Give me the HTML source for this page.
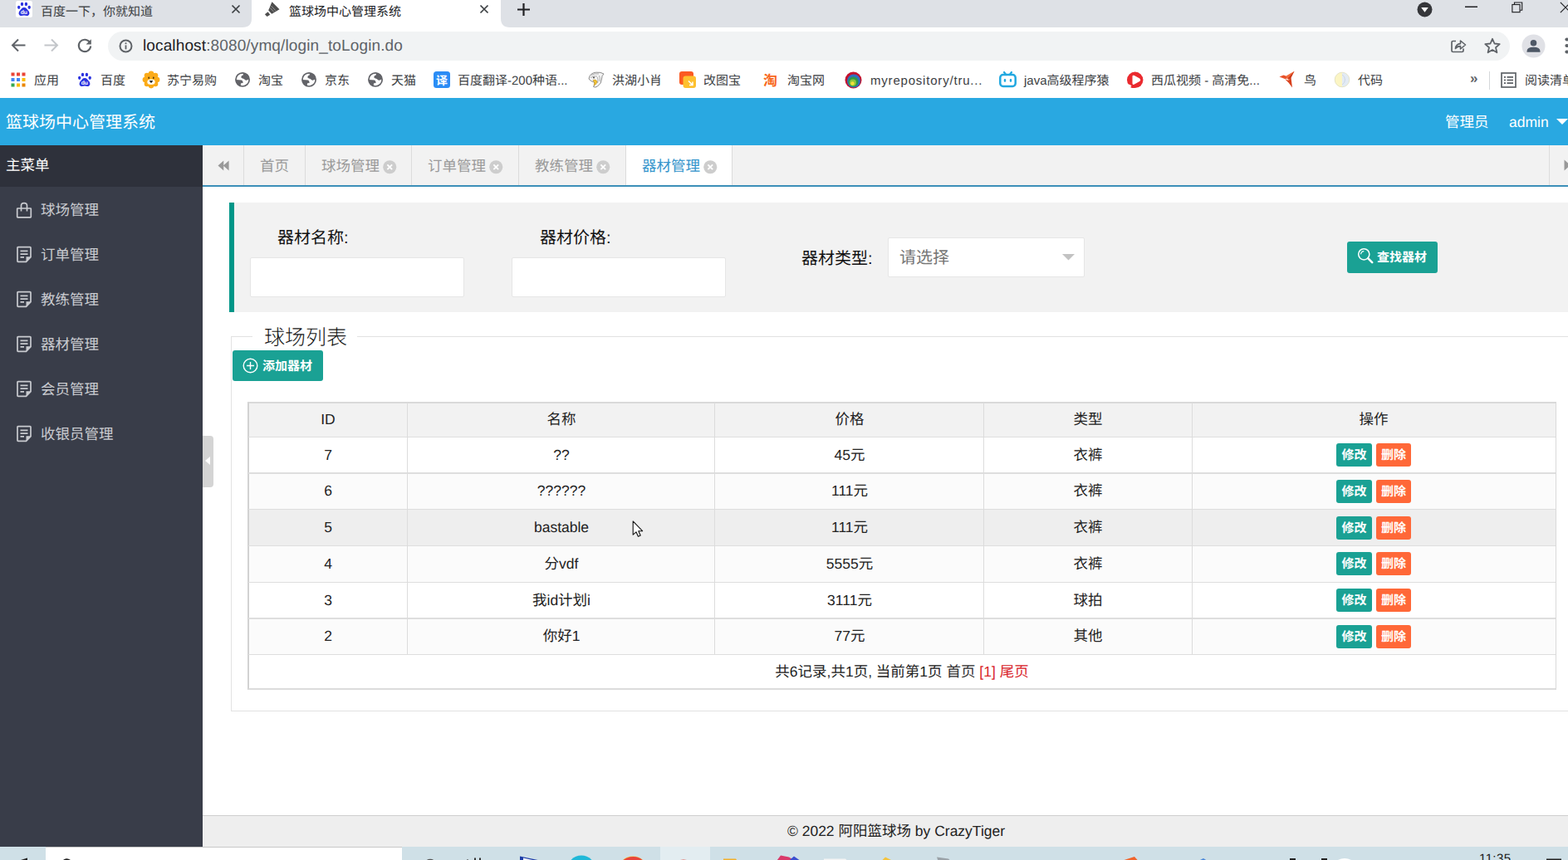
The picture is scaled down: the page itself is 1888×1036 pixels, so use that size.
<!DOCTYPE html>
<html lang="zh-CN">
<head>
<meta charset="utf-8">
<title>篮球场中心管理系统</title>
<style>
*{box-sizing:border-box;margin:0;padding:0}
html,body{width:1888px;height:1036px;overflow:hidden;background:#fff}
body{font-family:"Liberation Sans","Noto Sans CJK SC",sans-serif;color:#222;position:relative;-webkit-font-smoothing:antialiased;text-rendering:geometricPrecision}
.a{position:absolute;white-space:nowrap}
svg{position:absolute;overflow:visible}
/* ---------- browser chrome ---------- */
#tabstrip{left:0;top:0;width:1888px;height:32.800px;background:#dee1e6}
#toolbar{left:0;top:32.800px;width:1888px;height:43.200px;background:#fff}
#bmbar{left:0;top:76px;width:1888px;height:42px;background:#fff}
.tt{font-size:15px;line-height:20px;color:#3c4043;top:5px}
.bm{font-size:15px;line-height:20px;color:#3c4043;top:88px}
/* ---------- app ---------- */
#hdr{left:0;top:118px;width:1888px;height:57px;background:#29a8e1}
#side{left:0;top:175px;width:244px;height:845px;background:#393d49}
#sidet{left:0;top:175px;width:244px;height:50px;background:#2e313b}
.mi{left:49px;font-size:17.5px;line-height:24px;color:#c9cbd0}
#tabbar{left:244px;top:175px;width:1644px;height:48px;background:#f2f2f2}
#tabline{left:244px;top:222.500px;width:1644px;height:2.500px;background:#3c8fb8}
.sep{top:175px;width:1px;height:48px;background:#dcdcdc}
.tb{top:188px;font-size:17.5px;line-height:24px;color:#9a9a9a}
.tx{top:192px;width:15px;height:15px;border-radius:50%;background:#cfcfcf}
#form{left:276px;top:244px;width:1612px;height:132px;background:#f2f2f2;border-left:6px solid #009688}
.lbl{font-size:20px;line-height:28px;color:#111}
.inp{background:#fff;border:1px solid #e6e6e6;border-radius:2px}
.btn{background:#1aa194;border-radius:3px;color:#fff;font-weight:bold;font-size:15px;text-align:center}
/* table */
.hl{height:1px;background:#dedede;left:299px;width:1574px}
.vl{width:1px;background:#dcdcdc;top:485px;height:303px}
.td{font-size:17.5px;line-height:24px;color:#222;text-align:center;transform:translateX(-50%)}
.be{width:43px;height:28px;border-radius:3px;background:#1aa194;color:#fff;font-weight:bold;font-size:15px;line-height:30px;text-align:center;left:1609px}
.bd{width:42px;height:28px;border-radius:3px;background:#ff6838;color:#fff;font-weight:bold;font-size:15px;line-height:30px;text-align:center;left:1657px}
#foot{left:244px;top:982px;width:1644px;height:38px;background:#eee;border-top:1px solid #cfcfcf}
#task{left:0;top:1020px;width:1888px;height:16px;background:#cfe0e7}
</style>
</head>
<body>
<!-- ================= BROWSER CHROME ================= -->
<div class="a" id="tabstrip"></div>
<div class="a" id="toolbar"></div>
<div class="a" id="bmbar"></div>

<!-- tab strip -->
<svg style="left:0;top:0" width="1888" height="33"><path d="M292,33 Q303,33 303,22 L303,0 L603,0 L603,22 Q603,33 614,33 Z" fill="#fff"/></svg>
<svg id="fav1" style="left:19px;top:1px" width="20" height="20" viewBox="0 0 20 20"><rect x="0" y="0" width="20" height="20" rx="2.500" fill="#fff"/><g fill="#2a32e0"><ellipse cx="3.700" cy="7.800" rx="1.700" ry="2.100"/><ellipse cx="7.500" cy="3.900" rx="1.700" ry="2.200"/><ellipse cx="12.400" cy="3.900" rx="1.700" ry="2.200"/><ellipse cx="16.200" cy="7.800" rx="1.700" ry="2.100"/><path d="M10,7.900c2.500,0,3.500,2.200,5,3.900c1.900,2.100,2.100,5.300-.7,6.100c-1.500,.4-2.700-.3-4.300-.3s-2.800,.7-4.300,.3c-2.800-.8-2.600-4-.7-6.100C6.500,10.100,7.500,7.900,10,7.900z"/></g><text x="9.800" y="16.400" font-size="6.800" font-weight="bold" fill="#fff" text-anchor="middle" font-family="Liberation Sans">du</text></svg>
<div class="a tt" style="left:49px">百度一下，你就知道</div>
<svg style="left:278px;top:5px" width="12" height="12" viewBox="0 0 12 12"><path d="M1.500,1.500L10.500,10.500M10.500,1.500L1.500,10.500" stroke="#3c4043" stroke-width="1.700" fill="none"/></svg>
<svg id="fav2" style="left:318px;top:0px" width="20" height="22" viewBox="318 0 20 22"><path d="M327.500,2.200L336.500,11.300L327.200,16.800L323.200,12.600Z" fill="#4d4d4d"/><path d="M322.600,14.300L325.300,17.800L321.500,19.900L318.900,17.300Z" fill="#4d4d4d"/><path d="M325.200,9.400L329.700,14.200M326.600,7.200L331.800,12.700" stroke="#bdbdbd" stroke-width=".7" fill="none"/></svg>
<div class="a tt" style="left:348px;color:#202124">篮球场中心管理系统</div>
<svg style="left:577px;top:5px" width="12" height="12" viewBox="0 0 12 12"><path d="M1.500,1.500L10.500,10.500M10.500,1.500L1.500,10.500" stroke="#3c4043" stroke-width="1.700" fill="none"/></svg>
<svg style="left:622px;top:3px" width="17" height="17" viewBox="0 0 17 17"><path d="M8.500,1V16M1,8.500H16" stroke="#202124" stroke-width="2.200" fill="none"/></svg>
<svg style="left:1706px;top:2px" width="19" height="19" viewBox="0 0 19 19"><circle cx="9.500" cy="9.500" r="9" fill="#35363a"/><path d="M5.200,7L13.800,7L9.500,12.800Z" fill="#fff"/></svg>
<svg style="left:1764px;top:7px" width="16" height="3"><rect x="0" y="0.500" width="15" height="1.500" fill="#202124"/></svg>
<svg style="left:1820px;top:1.500px" width="14" height="14" viewBox="0 0 16 16"><rect x="1" y="4" width="10.500" height="10.500" fill="none" stroke="#202124" stroke-width="1.300"/><path d="M4,4V1.200H14.500V11.700H11.500" fill="none" stroke="#202124" stroke-width="1.300"/></svg>
<svg style="left:1878px;top:2px" width="14" height="14" viewBox="0 0 16 16"><path d="M1,1L15,15M15,1L1,15" stroke="#202124" stroke-width="1.400" fill="none"/></svg>

<!-- toolbar -->
<svg style="left:13px;top:45.400px" width="19" height="19" viewBox="0 0 19 19"><path d="M17.500,9.500H2.500M9,2.500L2,9.500L9,16.500" stroke="#5f6368" stroke-width="2" fill="none"/></svg>
<svg style="left:52px;top:45.400px" width="19" height="19" viewBox="0 0 19 19"><path d="M1.500,9.500H16.500M10,2.500L17,9.500L10,16.500" stroke="#c3c6ca" stroke-width="2" fill="none"/></svg>
<svg style="left:92px;top:44.500px" width="20" height="20" viewBox="0 0 20 20"><path d="M16.200,6.200A7.200,7.200 0 1 0 17.200,10.500" stroke="#5f6368" stroke-width="2.100" fill="none"/><path d="M17.800,2.200V8.400H11.600Z" fill="#5f6368"/></svg>
<div class="a" style="left:130px;top:38px;width:1688px;height:35px;border-radius:18px;background:#f1f3f4"></div>
<svg style="left:143px;top:47px" width="17" height="17" viewBox="0 0 17 17"><circle cx="8.500" cy="8.500" r="7" fill="none" stroke="#5f6368" stroke-width="2"/><rect x="7.600" y="7.400" width="1.800" height="5" fill="#5f6368"/><rect x="7.600" y="4.300" width="1.800" height="1.800" fill="#5f6368"/></svg>
<div class="a" id="url" style="left:172px;top:44px;font-size:19px;line-height:24px;color:#5f6368;letter-spacing:.13px"><span style="color:#202124">localhost</span>:8080/ymq/login_toLogin.do</div>
<svg style="left:1745px;top:44px" width="22" height="22" viewBox="0 0 22 22"><path d="M8,5.500H4.500Q3,5.500 3,7V17Q3,18.500 4.500,18.500H15.500Q17,18.500 17,17V14.500" fill="none" stroke="#5f6368" stroke-width="1.700"/><path d="M7.500,14.500Q8,9 13.500,8.600V5L19.500,10L13.500,15V11.600Q9.500,11.600 7.500,14.500Z" fill="none" stroke="#5f6368" stroke-width="1.600" stroke-linejoin="round"/></svg>
<svg style="left:1786px;top:44px" width="22" height="22" viewBox="0 0 22 22"><path d="M11,2.800L13.500,8.500L19.700,9.100L15,13.200L16.400,19.300L11,16.100L5.600,19.300L7,13.200L2.300,9.100L8.500,8.500Z" fill="none" stroke="#5f6368" stroke-width="1.800" stroke-linejoin="round"/></svg>
<svg style="left:1832px;top:41px" width="29" height="29" viewBox="0 0 29 29"><circle cx="14.500" cy="14.500" r="14" fill="#e0e1e6"/><circle cx="14.500" cy="10.800" r="3.800" fill="#4e5866"/><path d="M6.500,20.800Q6.500,15.800 14.500,15.800Q22.500,15.800 22.500,20.800V21.800H6.500Z" fill="#4e5866"/></svg>
<svg style="left:1884px;top:44px" width="5" height="22" viewBox="0 0 5 22"><circle cx="2.500" cy="3.500" r="2.100" fill="#5f6368"/><circle cx="2.500" cy="11" r="2.100" fill="#5f6368"/><circle cx="2.500" cy="18.500" r="2.100" fill="#5f6368"/></svg>

<!-- bookmarks -->
<svg style="left:13px;top:87px" width="18" height="18" viewBox="0 0 18 18"><g><rect x="0.500" y="0.500" width="4" height="4" fill="#ea4335"/><rect x="7" y="0.500" width="4" height="4" fill="#ea4335"/><rect x="13.500" y="0.500" width="4" height="4" fill="#ea4335"/><rect x="0.500" y="7" width="4" height="4" fill="#4285f4"/><rect x="7" y="7" width="4" height="4" fill="#4285f4"/><rect x="13.500" y="7" width="4" height="4" fill="#fbbc05"/><rect x="0.500" y="13.500" width="4" height="4" fill="#34a853"/><rect x="7" y="13.500" width="4" height="4" fill="#fbbc05"/><rect x="13.500" y="13.500" width="4" height="4" fill="#ea8600"/></g></svg>
<div class="a bm" style="left:41px">应用</div>
<svg style="left:92px;top:86px" width="20" height="20" viewBox="0 0 20 20"><g fill="#2a32e0"><ellipse cx="3.700" cy="7.800" rx="1.700" ry="2.100"/><ellipse cx="7.500" cy="3.900" rx="1.700" ry="2.200"/><ellipse cx="12.400" cy="3.900" rx="1.700" ry="2.200"/><ellipse cx="16.200" cy="7.800" rx="1.700" ry="2.100"/><path d="M10,7.900c2.500,0,3.500,2.200,5,3.900c1.900,2.100,2.100,5.300-.7,6.100c-1.500,.4-2.700-.3-4.300-.3s-2.800,.7-4.300,.3c-2.800-.8-2.600-4-.7-6.100C6.500,10.100,7.500,7.900,10,7.900z"/></g><text x="9.800" y="16.400" font-size="6.800" font-weight="bold" fill="#fff" text-anchor="middle" font-family="Liberation Sans">du</text></svg>
<div class="a bm" style="left:121px">百度</div>
<svg style="left:171px;top:85px" width="22" height="22" viewBox="0 0 22 22"><g fill="#fbab18"><circle cx="11" cy="11" r="8.300"/><circle cx="11.00" cy="3.90" r="3.300"/><circle cx="16.02" cy="5.98" r="3.300"/><circle cx="18.10" cy="11.00" r="3.300"/><circle cx="16.02" cy="16.02" r="3.300"/><circle cx="11.00" cy="18.10" r="3.300"/><circle cx="5.98" cy="16.02" r="3.300"/><circle cx="3.90" cy="11.00" r="3.300"/><circle cx="5.98" cy="5.98" r="3.300"/></g><ellipse cx="11" cy="13.800" rx="4.700" ry="3.300" fill="#fffaf0"/><ellipse cx="8.200" cy="8.700" rx=".75" ry="1.200" fill="#3a2a14"/><ellipse cx="13.800" cy="8.700" rx=".75" ry="1.200" fill="#3a2a14"/><path d="M9.200,12.500H12.800L11,14.700Z" fill="#111" stroke="#111" stroke-width=".6" stroke-linejoin="round"/></svg>
<div class="a bm" style="left:201px">苏宁易购</div>
<div class="a bm" style="left:311px">淘宝</div>
<div class="a bm" style="left:391px">京东</div>
<div class="a bm" style="left:471px">天猫</div>
<svg style="left:522px;top:86px" width="20" height="20" viewBox="0 0 20 20"><rect x="0" y="0" width="20" height="20" rx="3.500" fill="#2b8cf5"/><text x="3" y="15.600" font-size="14" font-weight="bold" fill="#fff" font-family="'Liberation Sans','Noto Sans CJK SC',sans-serif">译</text></svg>
<div class="a bm" style="left:551px">百度翻译-200种语...</div>
<svg style="left:707px;top:85px" width="22" height="22" viewBox="0 0 22 22"><path d="M2,10Q3,3 10.500,2.200Q16.500,1.600 20,4Q17.500,6 17.500,10Q17.500,15.500 12.500,19Q9.500,21 7.500,19.500Q10,16.500 8.500,14Q4.500,13.500 2,10Z" fill="#f4f4f4" stroke="#8c8c8c" stroke-width="1"/><path d="M5,5.500Q9,3 14,4M4,8.500Q8,6 12,7M14.500,6Q16,9 15,13M12.500,8Q13.500,11 12.500,15" stroke="#9a9a9a" stroke-width=".8" fill="none"/><path d="M7,11.500Q10.500,10 12,13Q11.500,17 8,18Q10,15 7,11.500Z" fill="#f2c230" stroke="#b88a18" stroke-width=".5"/><circle cx="8" cy="8.500" r="1" fill="#444"/></svg>
<div class="a bm" style="left:737px">洪湖小肖</div>
<svg style="left:818px;top:86px" width="20" height="20" viewBox="0 0 20 20"><rect x="0" y="0" width="17" height="16" rx="3" fill="#fb5a22"/><rect x="4.500" y="5.500" width="15.500" height="14.500" rx="3" fill="#fdc02f"/><path d="M11,11.500L16,16.500M16,12.500V16.500H12" stroke="#fff" stroke-width="1.500" fill="none"/></svg>
<div class="a bm" style="left:847px">改图宝</div>
<div class="a" style="left:919px;top:87px;font-size:17px;line-height:22px;font-weight:bold;color:#f8681c">淘</div>
<div class="a bm" style="left:948px">淘宝网</div>
<svg style="left:1017px;top:86px" width="21" height="21" viewBox="0 0 21 21"><circle cx="10.500" cy="10.500" r="10" fill="#c4122d"/><circle cx="11" cy="11.500" r="8" fill="#2f6fc1"/><circle cx="10.500" cy="12.500" r="6" fill="#2f9a46"/><circle cx="10" cy="13.500" r="4" fill="#8cc63f"/><circle cx="9.500" cy="14.500" r="2.200" fill="#f5e03a"/></svg>
<div class="a bm" style="left:1048px;letter-spacing:.8px">myrepository/tru...</div>
<svg style="left:1203px;top:85px" width="21" height="21" viewBox="0 0 21 21"><path d="M6,2L8.300,5M15,2L12.700,5" stroke="#22a8e0" stroke-width="2.200" fill="none" stroke-linecap="round"/><rect x="1.300" y="5" width="18.400" height="14" rx="3.500" fill="none" stroke="#22a8e0" stroke-width="2.500"/><rect x="5.800" y="10" width="2.400" height="3.800" rx="1.100" fill="#22a8e0"/><rect x="12.800" y="10" width="2.400" height="3.800" rx="1.100" fill="#22a8e0"/></svg>
<div class="a bm" style="left:1233px">java高级程序猿</div>
<svg style="left:1356px;top:86px" width="21" height="21" viewBox="0 0 21 21"><circle cx="10.700" cy="10.300" r="9.700" fill="#ea2a2f"/><path d="M3.500,14.500Q3,18.500 6.500,19.800Q9,20.500 10.500,19.500Z" fill="#ea2a2f"/><path d="M8.300,6.300Q8.300,5 9.500,5.700L15.800,9.300Q17,10.300 15.800,11.300L9.500,14.900Q8.300,15.600 8.300,14.300Z" fill="#fff" stroke="#fff" stroke-width="1.600" stroke-linejoin="round"/><path d="M1.500,15.500Q4.500,15 6.500,17.500L4.200,20Z" fill="#fff"/></svg>
<div class="a bm" style="left:1386px">西瓜视频 - 高清免...</div>
<svg style="left:1540px;top:85px" width="22" height="22" viewBox="0 0 22 22"><path d="M0.500,7.500L5.500,5.500L8.500,6.500L10.500,9.500L7,10Z" fill="#e8522a"/><path d="M8.500,6.500L18.500,0.800L14.500,8.500L11.500,12Z" fill="#f26a3a"/><path d="M7,10L11.500,12L14.500,8.500L16,20.500L11.500,14.500Z" fill="#d8401c"/><path d="M10.500,9.500L18.500,0.800L13.500,10.500Z" fill="#c9381a"/></svg>
<div class="a bm" style="left:1570px">鸟</div>
<svg style="left:1606px;top:86px" width="20" height="20" viewBox="0 0 20 20"><circle cx="10" cy="10" r="8.800" fill="#e3ebf4"/><path d="M10,1.200A8.800,8.800 0 0 0 10,18.800Z" fill="#fbf5c4"/><circle cx="10" cy="10" r="8.800" fill="none" stroke="#e4e2c2" stroke-width=".9"/><path d="M10,4Q13.500,6 13.500,10Q13.500,14 10,16" fill="none" stroke="#c9d4e2" stroke-width=".9"/></svg>
<div class="a bm" style="left:1635px">代码</div>
<div class="a" style="left:1770px;top:84px;font-size:17px;line-height:22px;color:#5f6368;font-weight:bold">»</div>
<div class="a" style="left:1793px;top:86px;width:1px;height:22px;background:#d5d7da"></div>
<svg style="left:1807px;top:87px" width="19" height="19" viewBox="0 0 19 19"><rect x="1" y="1" width="17" height="17" fill="none" stroke="#5f6368" stroke-width="1.700"/><g fill="#5f6368"><rect x="4" y="5" width="2" height="1.800"/><rect x="7.500" y="5" width="7.500" height="1.800"/><rect x="4" y="8.600" width="2" height="1.800"/><rect x="7.500" y="8.600" width="7.500" height="1.800"/><rect x="4" y="12.200" width="2" height="1.800"/><rect x="7.500" y="12.200" width="7.500" height="1.800"/></g></svg>
<div class="a bm" style="left:1836px">阅读清单</div>
<svg style="left:280px;top:84px" width="24" height="24" viewBox="0 0 24 24"><circle cx="12.050" cy="11.900" r="8.100" fill="none" stroke="#626368" stroke-width="1.700"/><path d="M12.900,3.500L12.700,6.600Q10.500,7.200 10.300,8.800Q10.100,10.200 12,10.400Q13.900,10.600 14.800,12Q15.800,13.100 17.200,12.500L19.900,11.600A8.400,8.400 0 0 0 12.900,3.500Z" fill="#626368"/><path d="M3.700,12L10.800,12.400Q12.200,12.800 12.400,14.400Q13.100,15.800 12.200,16L10.200,16.200Q9.600,17.400 9.900,20.200A8.400,8.400 0 0 1 3.700,12Z" fill="#626368"/></svg>
<svg style="left:360px;top:84px" width="24" height="24" viewBox="0 0 24 24"><circle cx="12.050" cy="11.900" r="8.100" fill="none" stroke="#626368" stroke-width="1.700"/><path d="M12.900,3.500L12.700,6.600Q10.500,7.200 10.300,8.800Q10.100,10.200 12,10.400Q13.900,10.600 14.800,12Q15.800,13.100 17.200,12.500L19.900,11.600A8.400,8.400 0 0 0 12.900,3.500Z" fill="#626368"/><path d="M3.700,12L10.800,12.400Q12.200,12.800 12.400,14.400Q13.100,15.800 12.200,16L10.200,16.200Q9.600,17.400 9.900,20.200A8.400,8.400 0 0 1 3.700,12Z" fill="#626368"/></svg>
<svg style="left:440px;top:84px" width="24" height="24" viewBox="0 0 24 24"><circle cx="12.050" cy="11.900" r="8.100" fill="none" stroke="#626368" stroke-width="1.700"/><path d="M12.900,3.500L12.700,6.600Q10.500,7.200 10.300,8.800Q10.100,10.200 12,10.400Q13.900,10.600 14.800,12Q15.800,13.100 17.200,12.500L19.900,11.600A8.400,8.400 0 0 0 12.900,3.500Z" fill="#626368"/><path d="M3.700,12L10.800,12.400Q12.200,12.800 12.400,14.400Q13.100,15.800 12.200,16L10.200,16.200Q9.600,17.400 9.900,20.200A8.400,8.400 0 0 1 3.700,12Z" fill="#626368"/></svg>
<!--CHROME-->

<!-- ================= APP ================= -->
<div class="a" id="hdr"></div>
<div class="a" id="side"></div>
<div class="a" id="sidet"></div>
<div class="a" id="tabbar"></div>
<div class="a" id="tabline"></div>
<div class="a" id="foot"></div>
<div class="a" id="task"></div>

<!-- header -->
<div class="a" style="left:7px;top:134px;font-size:20px;line-height:28px;color:#fff">篮球场中心管理系统</div>
<div class="a" style="left:1740px;top:135px;font-size:17.500px;line-height:24px;color:#fff">管理员</div>
<div class="a" style="left:1817px;top:135px;font-size:17.500px;line-height:24px;color:#fff">admin</div>
<svg style="left:1874px;top:143px" width="14" height="8"><path d="M0,0H14L7,7Z" fill="#fff"/></svg>
<!-- sidebar -->
<div class="a" style="left:7px;top:187px;font-size:17.500px;line-height:24px;color:#fff">主菜单</div>
<svg style="left:19px;top:243px" width="20" height="20" viewBox="0 0 20 20"><rect x="1.700" y="8" width="16.600" height="10.800" rx=".6" fill="none" stroke="#c9cbd0" stroke-width="1.700"/><path d="M6.500,11.500V4.800Q6.500,1.600 10,1.600Q13.500,1.600 13.500,4.800V11.500" fill="none" stroke="#c9cbd0" stroke-width="1.700"/></svg>
<div class="a mi" style="top:241px">球场管理</div>
<div class="a mi" style="top:295px">订单管理</div>
<div class="a mi" style="top:349px">教练管理</div>
<div class="a mi" style="top:403px">器材管理</div>
<div class="a mi" style="top:457px">会员管理</div>
<div class="a mi" style="top:511px">收银员管理</div>
<div class="a" style="left:244px;top:525px;width:13px;height:62px;background:#d4d4d4;border-radius:0 4px 4px 0"></div>
<svg style="left:247px;top:550px" width="6" height="10"><path d="M6,0V10L0,5Z" fill="#fff"/></svg>
<!-- tab bar -->
<svg style="left:261.500px;top:192.500px" width="14.500" height="13" viewBox="0 0 16 14" preserveAspectRatio="none"><path d="M8,0.500V13.500L0.500,7ZM15,0.500V13.500L7.500,7Z" fill="#999"/></svg>
<div class="a sep" style="left:293px"></div>
<div class="a tb" style="left:313px">首页</div>
<div class="a sep" style="left:367px"></div>
<div class="a tb" style="left:387px">球场管理</div>
<div class="a sep" style="left:495px"></div>
<div class="a tb" style="left:515px">订单管理</div>
<div class="a sep" style="left:624px"></div>
<div class="a tb" style="left:644px">教练管理</div>
<div class="a sep" style="left:753px"></div>
<div class="a" style="left:754px;top:175px;width:127px;height:48px;background:#fff"></div>
<div class="a tb" style="left:773px;color:#3595cc">器材管理</div>
<div class="a sep" style="left:881px"></div>
<div class="a sep" style="left:1865px"></div>
<svg style="left:1883px;top:192px" width="6" height="14"><path d="M0.500,0.500V13.500L8,7Z" fill="#999"/></svg>
<!-- form -->
<div class="a" id="form"></div>
<div class="a lbl" style="left:334px;top:273px">器材名称:</div>
<div class="a inp" style="left:301px;top:310px;width:258px;height:48px"></div>
<div class="a lbl" style="left:650px;top:273px">器材价格:</div>
<div class="a inp" style="left:616px;top:310px;width:258px;height:48px"></div>
<div class="a lbl" style="left:965px;top:298px">器材类型:</div>
<div class="a inp" style="left:1069px;top:286px;width:237px;height:48px"></div>
<div class="a" style="left:1083px;top:297px;font-size:20px;line-height:28px;color:#757575">请选择</div>
<svg style="left:1279px;top:306px" width="15" height="8"><path d="M0,0H15L7.500,7.500Z" fill="#c2c2c2"/></svg>
<div class="a btn" style="left:1622px;top:291px;width:109px;height:38px"></div>
<svg style="left:1634px;top:298px" width="20" height="20" viewBox="0 0 20 20"><circle cx="8.300" cy="8.300" r="6.600" fill="none" stroke="#fff" stroke-width="1.500"/><path d="M4.600,8.300A3.700,3.700 0 0 1 8.300,4.600" fill="none" stroke="#fff" stroke-width="1.200"/><path d="M13.200,13.200L18.200,18.200" stroke="#fff" stroke-width="2.600" stroke-linecap="round"/></svg>
<div class="a" style="left:1658px;top:301px;font-size:15px;line-height:20px;color:#fff;font-weight:bold">查找器材</div>
<!-- fieldset -->
<div class="a" style="left:278px;top:405px;width:1620px;height:452px;border:1px solid #e2e2e2"></div>
<div class="a" style="left:304px;top:388px;width:126px;height:34px;background:#fff"></div>
<div class="a" style="left:318px;top:390px;font-size:25px;line-height:34px;color:#1a1a1a;font-weight:300">球场列表</div>
<div class="a btn" style="left:280px;top:422px;width:109px;height:37px"></div>
<svg style="left:292px;top:431px" width="19" height="19" viewBox="0 0 19 19"><circle cx="9.500" cy="9.500" r="8.300" fill="none" stroke="#fff" stroke-width="1.400"/><path d="M9.500,5V14M5,9.500H14" stroke="#fff" stroke-width="1.400"/></svg>
<div class="a" style="left:316px;top:432px;font-size:15px;line-height:20px;color:#fff;font-weight:bold">添加器材</div>
<!-- table -->
<div class="a" style="left:298px;top:484px;width:1576px;height:347px;border:1px solid #d9d9d9;border-left:2px solid #d2d2d2;border-top:2px solid #d9d9d9;border-bottom:2px solid #dcdcdc;background:#fff"></div>
<div class="a" style="left:300px;top:486px;width:1573px;height:40px;background:#f2f2f2"></div>
<div class="a" style="left:300px;top:571px;width:1573px;height:42px;background:#fbfbfb"></div>
<div class="a" style="left:300px;top:614px;width:1573px;height:43px;background:#eeeeee"></div>
<div class="a" style="left:300px;top:658px;width:1573px;height:43px;background:#fbfbfb"></div>
<div class="a" style="left:300px;top:746px;width:1573px;height:42px;background:#fbfbfb"></div>
<div class="a hl" style="top:526px;height:1px"></div>
<div class="a hl" style="top:569px;height:2px"></div>
<div class="a hl" style="top:613px;height:1px"></div>
<div class="a hl" style="top:657px;height:1px"></div>
<div class="a hl" style="top:701px;height:1px"></div>
<div class="a hl" style="top:744px;height:2px"></div>
<div class="a hl" style="top:788px;height:1px"></div>
<div class="a vl" style="left:490px"></div>
<div class="a vl" style="left:860px"></div>
<div class="a vl" style="left:1184px"></div>
<div class="a vl" style="left:1435px"></div>
<div class="a td" style="left:395px;top:493px">ID</div>
<div class="a td" style="left:676px;top:493px">名称</div>
<div class="a td" style="left:1023px;top:493px">价格</div>
<div class="a td" style="left:1310px;top:493px">类型</div>
<div class="a td" style="left:1654px;top:493px">操作</div>
<div class="a td" style="left:395px;top:536px">7</div>
<div class="a td" style="left:676px;top:536px">??</div>
<div class="a td" style="left:1023px;top:536px">45元</div>
<div class="a td" style="left:1310px;top:536px">衣裤</div>
<div class="a be" style="top:534px">修改</div><div class="a bd" style="top:534px">删除</div>
<div class="a td" style="left:395px;top:579px">6</div>
<div class="a td" style="left:676px;top:579px">??????</div>
<div class="a td" style="left:1023px;top:579px">111元</div>
<div class="a td" style="left:1310px;top:579px">衣裤</div>
<div class="a be" style="top:577.75px">修改</div><div class="a bd" style="top:577.75px">删除</div>
<div class="a td" style="left:395px;top:623px">5</div>
<div class="a td" style="left:676px;top:623px">bastable</div>
<div class="a td" style="left:1023px;top:623px">111元</div>
<div class="a td" style="left:1310px;top:623px">衣裤</div>
<div class="a be" style="top:621.5px">修改</div><div class="a bd" style="top:621.5px">删除</div>
<div class="a td" style="left:395px;top:667px">4</div>
<div class="a td" style="left:676px;top:667px">分vdf</div>
<div class="a td" style="left:1023px;top:667px">5555元</div>
<div class="a td" style="left:1310px;top:667px">衣裤</div>
<div class="a be" style="top:665.25px">修改</div><div class="a bd" style="top:665.25px">删除</div>
<div class="a td" style="left:395px;top:711px">3</div>
<div class="a td" style="left:676px;top:711px">我id计划i</div>
<div class="a td" style="left:1023px;top:711px">3111元</div>
<div class="a td" style="left:1310px;top:711px">球拍</div>
<div class="a be" style="top:709px">修改</div><div class="a bd" style="top:709px">删除</div>
<div class="a td" style="left:395px;top:754px">2</div>
<div class="a td" style="left:676px;top:754px">你好1</div>
<div class="a td" style="left:1023px;top:754px">77元</div>
<div class="a td" style="left:1310px;top:754px">其他</div>
<div class="a be" style="top:752.75px">修改</div><div class="a bd" style="top:752.75px">删除</div>
<div class="a td" style="left:1086px;top:797px">共6记录,共1页, 当前第1页 <span style="color:#333">首页</span> <span style="color:#d9262c">[1] 尾页</span></div>
<svg style="left:19px;top:296px" width="20" height="21" viewBox="0 0 20 20" preserveAspectRatio="none"><path d="M2,2.400Q2,1.600 2.800,1.600H17.200Q18,1.600 18,2.400V13L12.500,18.400H2.800Q2,18.400 2,17.600Z" fill="none" stroke="#c9cbd0" stroke-width="1.700"/><path d="M18,12.500H12.500V18.400Z" fill="#c9cbd0"/><path d="M5.500,6H14.500M5.500,9.600H14.500M5.500,13.200H10" stroke="#c9cbd0" stroke-width="1.700"/></svg>
<svg style="left:19px;top:350px" width="20" height="21" viewBox="0 0 20 20" preserveAspectRatio="none"><path d="M2,2.400Q2,1.600 2.800,1.600H17.200Q18,1.600 18,2.400V13L12.500,18.400H2.800Q2,18.400 2,17.600Z" fill="none" stroke="#c9cbd0" stroke-width="1.700"/><path d="M18,12.500H12.500V18.400Z" fill="#c9cbd0"/><path d="M5.500,6H14.500M5.500,9.600H14.500M5.500,13.200H10" stroke="#c9cbd0" stroke-width="1.700"/></svg>
<svg style="left:19px;top:404px" width="20" height="21" viewBox="0 0 20 20" preserveAspectRatio="none"><path d="M2,2.400Q2,1.600 2.800,1.600H17.200Q18,1.600 18,2.400V13L12.500,18.400H2.800Q2,18.400 2,17.600Z" fill="none" stroke="#c9cbd0" stroke-width="1.700"/><path d="M18,12.500H12.500V18.400Z" fill="#c9cbd0"/><path d="M5.500,6H14.500M5.500,9.600H14.500M5.500,13.200H10" stroke="#c9cbd0" stroke-width="1.700"/></svg>
<svg style="left:19px;top:458px" width="20" height="21" viewBox="0 0 20 20" preserveAspectRatio="none"><path d="M2,2.400Q2,1.600 2.800,1.600H17.200Q18,1.600 18,2.400V13L12.500,18.400H2.800Q2,18.400 2,17.600Z" fill="none" stroke="#c9cbd0" stroke-width="1.700"/><path d="M18,12.500H12.500V18.400Z" fill="#c9cbd0"/><path d="M5.500,6H14.500M5.500,9.600H14.500M5.500,13.200H10" stroke="#c9cbd0" stroke-width="1.700"/></svg>
<svg style="left:19px;top:512px" width="20" height="21" viewBox="0 0 20 20" preserveAspectRatio="none"><path d="M2,2.400Q2,1.600 2.800,1.600H17.200Q18,1.600 18,2.400V13L12.500,18.400H2.800Q2,18.400 2,17.600Z" fill="none" stroke="#c9cbd0" stroke-width="1.700"/><path d="M18,12.500H12.500V18.400Z" fill="#c9cbd0"/><path d="M5.500,6H14.500M5.500,9.600H14.500M5.500,13.200H10" stroke="#c9cbd0" stroke-width="1.700"/></svg>
<svg style="left:461px;top:192.500px" width="16.500" height="16.500" viewBox="0 0 16 16"><circle cx="8" cy="8" r="7.800" fill="#cdcdcd"/><path d="M5.200,5.200L10.800,10.800M10.800,5.200L5.200,10.800" stroke="#fff" stroke-width="1.800"/></svg>
<svg style="left:589px;top:192.500px" width="16.500" height="16.500" viewBox="0 0 16 16"><circle cx="8" cy="8" r="7.800" fill="#cdcdcd"/><path d="M5.200,5.200L10.800,10.800M10.800,5.200L5.200,10.800" stroke="#fff" stroke-width="1.800"/></svg>
<svg style="left:718px;top:192.500px" width="16.500" height="16.500" viewBox="0 0 16 16"><circle cx="8" cy="8" r="7.800" fill="#cdcdcd"/><path d="M5.200,5.200L10.800,10.800M10.800,5.200L5.200,10.800" stroke="#fff" stroke-width="1.800"/></svg>
<svg style="left:847px;top:192.500px" width="16.500" height="16.500" viewBox="0 0 16 16"><circle cx="8" cy="8" r="7.800" fill="#cdcdcd"/><path d="M5.200,5.200L10.800,10.800M10.800,5.200L5.200,10.800" stroke="#fff" stroke-width="1.800"/></svg>
<div class="a" style="left:1079px;top:989px;transform:translateX(-50%);font-size:17.500px;line-height:24px;color:#222">© 2022 阿阳篮球场 by CrazyTiger</div>
<!--APP-->


<!-- taskbar sliver -->
<div class="a" style="left:55px;top:1020px;width:429px;height:16px;background:#fff;border-top:1px solid #c8c8c8"></div>
<div class="a" style="left:795px;top:1020px;width:60px;height:16px;background:#e3edf1"></div>
<svg style="left:0;top:1020px" width="1888" height="16" viewBox="0 0 1888 16"><g transform="translate(0,2.500)">
<path d="M25,13.500L33,11V13.500Z" fill="#222"/>
<path d="M76,13.500Q80,10 85,13.500Z" fill="#222"/>
<circle cx="518" cy="20" r="7" fill="none" stroke="#555" stroke-width="1.500"/>
<rect x="562" y="13" width="2" height="3" fill="#333"/><rect x="571" y="11" width="2" height="5" fill="#333"/><rect x="577" y="11" width="2" height="5" fill="#333"/>
<path d="M626,9L650,14V16H626Z" fill="#1f3fa8"/><path d="M630,11L648,15V16H630Z" fill="#f4f6fb"/>
<circle cx="700" cy="25" r="17" fill="#1fb8d8"/>
<circle cx="762" cy="27" r="18" fill="#f7c33a"/><path d="M745,22A18,18 0 0 1 776,16L762,27Z" fill="#e8453c"/>
<circle cx="823" cy="28" r="15" fill="#e0483e"/>
<path d="M871,12H886L889,16H871Z" fill="#f2b02c"/>
<path d="M934,16L940,8L950,10L960,16Z" fill="#d93a6a"/><path d="M948,16L956,9L966,16Z" fill="#3a4fd0"/>
<path d="M992,12H1018L1022,16H992Z" fill="#f4f4f4"/>
<path d="M1060,16L1066,10L1074,14L1078,16Z" fill="#f5c33b"/>
<path d="M1128,10L1142,12L1146,16H1130Z" fill="#9aa2a8"/>
<path d="M1352,14L1366,9.500L1370,14Z" fill="#f0642c"/>
<path d="M1444,14L1449,11.500L1453,14Z" fill="#4a88d8"/>
<rect x="1553" y="11.500" width="7" height="3" fill="#222"/><rect x="1591" y="11.500" width="7" height="3" fill="#222"/><path d="M1610,14Q1619,9 1628,14Z" fill="#fff"/>
<rect x="1862" y="12" width="18" height="2" fill="#222"/>
</g></svg>
<div class="a" style="left:1781px;top:1026px;font-size:15px;line-height:18px;letter-spacing:.4px;color:#1a1a1a">11:35</div>
<!-- mouse cursor -->
<svg style="left:761px;top:627px" width="14" height="21" viewBox="0 0 14 21"><path d="M1.200,1V17.200L5,13.800L7.400,19.200L10.200,18L7.800,12.700H12.600Z" fill="#fff" stroke="#111" stroke-width="1.100" stroke-linejoin="round"/></svg>
<!--TASK-->
</body>
</html>
